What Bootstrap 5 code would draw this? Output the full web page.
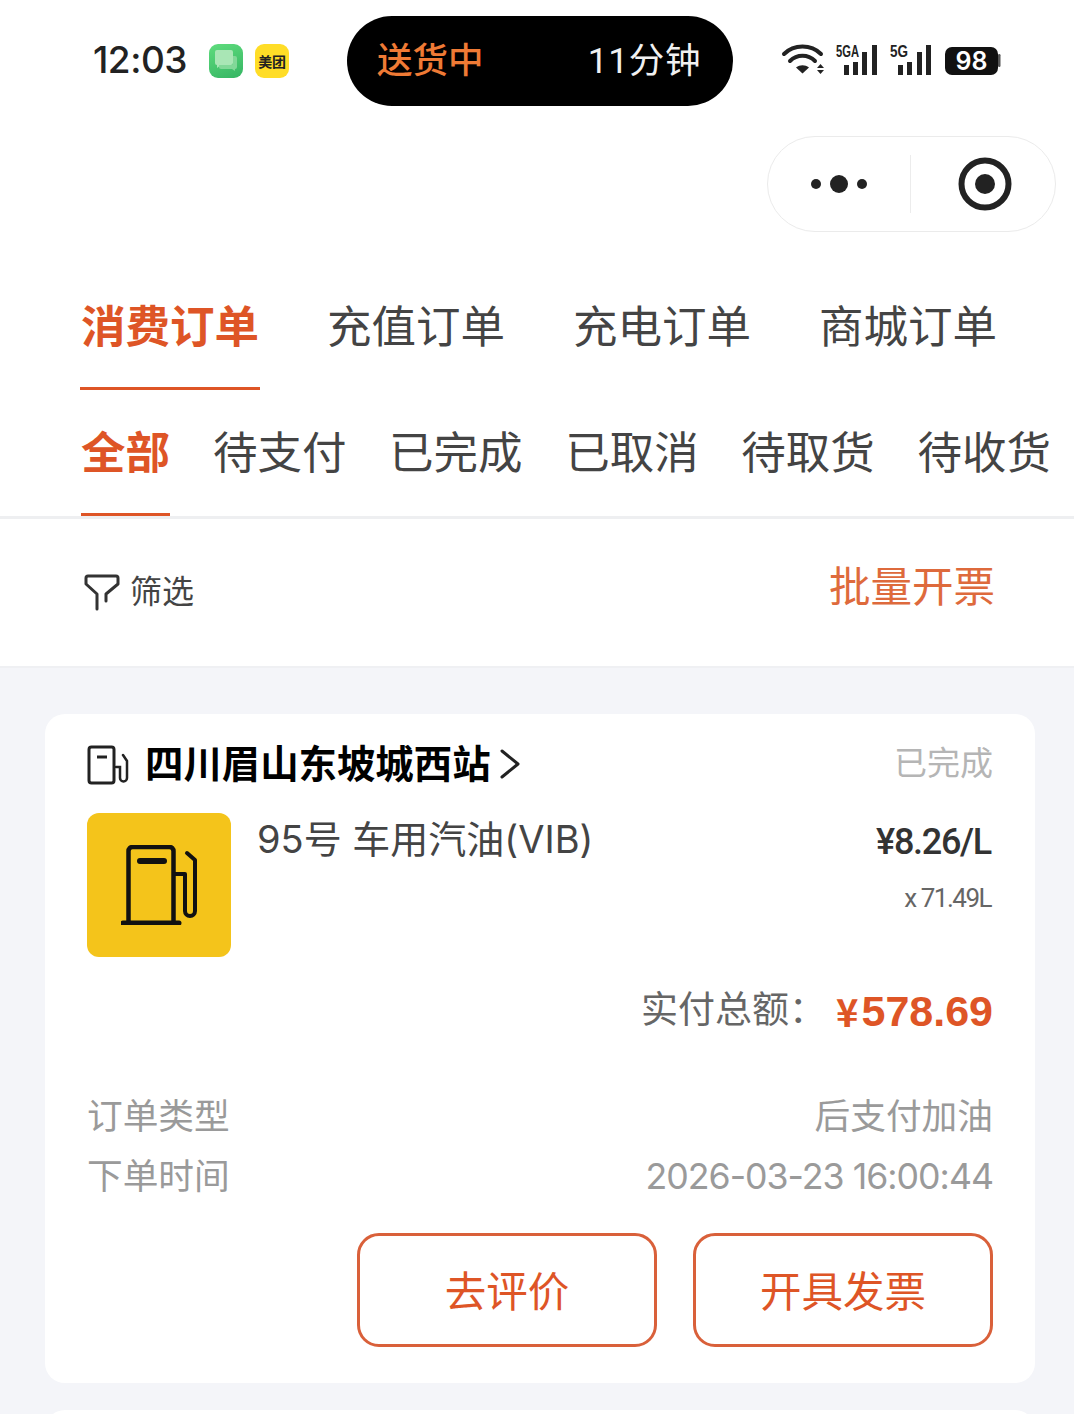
<!DOCTYPE html>
<html lang="zh"><head><meta charset="utf-8"><title>订单</title>
<link href="https://cdn.jsdelivr.net/npm/bootstrap@5.3.0/dist/css/bootstrap.min.css" rel="stylesheet">
<style>
html,body{height:1414px;overflow:hidden}
body{background:#f4f5f9;font-family:Roboto,"Noto Sans CJK SC",sans-serif;color:#333}
.top-white{background:#fff;height:668px;border-bottom:2px solid #eff0f3}
.status-row{height:136px;padding:16px 18px 0 93px}
.clock{font:500 37px/88px Inter,Roboto,sans-serif;color:#222;width:116px;letter-spacing:-.5px}
.app-ico{width:34px;height:34px;border-radius:9px;margin-top:28px}
.app-green{background:linear-gradient(160deg,#5fdc7d,#35b563);margin-right:12px}
.app-yellow{background:#ffdd27;font:700 14px/34px "Noto Sans CJK SC",sans-serif;color:#222;text-align:center;margin-right:58px;white-space:nowrap;letter-spacing:-.3px}
.island{width:386px;height:90px;border-radius:45px;background:#000;padding:0 32px 0 30px;line-height:90px;font-size:35.500px;font-weight:500}
.island-a{color:#ef7a35}.island-b{color:#f1f1f1;letter-spacing:.6px;font-weight:400}
.sys-icons{margin-left:48px;margin-top:26px;height:38px}
.caps-wrap{height:96px;padding-right:18px}
.capsule{width:289px;height:96px;border:1.5px solid #ebebeb;border-radius:48px}
.caps-l{width:143px;height:58px;border-right:1.5px solid #ececec}
.ring-cell{padding-left:4px}
.tabs-a{padding-left:80px;gap:66px;height:158px}
.tab-a{font-size:44.500px;line-height:1;color:#444;width:180px;text-align:center;height:158px;padding-top:74px;white-space:nowrap}
.tab-a.on,.tab-b.on{color:#de5526;font-weight:700}
.tab-a.on{border-bottom:3px solid #de5526}
.tabs-b{padding-left:81px;height:129px;border-bottom:3px solid #eeeff1}
.tab-b{font-size:44.500px;line-height:1;color:#444;padding-top:42px;height:126px;white-space:nowrap}
.tab-b.on{width:89px;border-bottom:3px solid #de5526}
.tabs-b .gap0{margin-left:43px}.tabs-b .gap1{margin-left:42.600px}
.filter-row{height:147px;padding:0 79px 1px 84px}
.filter-txt{font-size:32px;color:#444;margin-left:10px}
.batch{font-size:41.500px;color:#de6a3c;margin-top:-7px}
.order-box{margin:46px 39px 0 45px;height:669px;background:#fff;border-radius:20px;padding:26px 42px 0 42px}
.shop-icon{margin-right:15px}
.shop-name{font-size:38.400px;font-weight:700;color:#000;line-height:50px;white-space:nowrap}
.st{font-size:33px;color:#b5b5b5;margin-top:-2px}
.item-row{margin-top:23px;height:144px}
.thumb{width:144px;height:144px;background:#f4c41b;border-radius:12px}
.item-name{font-family:Inter,"Noto Sans CJK SC",sans-serif;font-size:38px;color:#444;margin-left:26px;line-height:52px;white-space:nowrap}
.unit-price{font-size:36px;font-weight:500;color:#333;line-height:56px;padding-top:1px;letter-spacing:-1.300px;margin-right:2px}
.qty{font-size:26px;color:#666;line-height:56px;letter-spacing:-1.500px;margin-right:2px}
.total-row{margin-top:26px;line-height:56px}
.total-lbl{font-size:37px;color:#666}
.yen{font:700 38px/56px "Noto Sans CJK SC",sans-serif;color:#de5526;margin-left:10px;margin-right:3px}
.total-val{font:700 43px/56px "Liberation Sans",Arial,sans-serif;color:#de5526}
.meta-first{margin-top:47px}
.meta-line{font-family:Inter,"Noto Sans CJK SC",sans-serif;font-size:35.700px;color:#9a9a9a;line-height:60px}
.meta-date{letter-spacing:-1px}
.acts{margin-top:27px;gap:36px}
.act-btn{width:300px;height:114px;border:3px solid #d9603a;border-radius:22px;color:#de5526;background:#fff;font-size:41.500px;line-height:1;padding:5px 0 0}
.act-btn:hover{color:#de5526;background:#fff;border-color:#d9603a}
.next-box{margin:27px 39px 0 45px;height:60px;background:#fff;border-radius:20px}
</style></head>
<body>
<div class="top-white">
 <div class="status-row d-flex align-items-start">
  <div class="clock">12:03</div>
  <div class="app-ico app-green d-flex align-items-center justify-content-center">
   <svg width="28" height="28" viewBox="0 0 28 28"><path d="M3 5a2 2 0 0 1 2-2h14a2 2 0 0 1 2 2v11a2 2 0 0 1-2 2H9l-4 3v-3a2 2 0 0 1-2-2z" fill="#a9e6b5"/><path d="M7 18h12a2 2 0 0 0 2-2V9h2a2 2 0 0 1 2 2v9a2 2 0 0 1-2 2v2l-3-2H9a2 2 0 0 1-2-2z" fill="#82d898"/></svg>
  </div>
  <div class="app-ico app-yellow">美团</div>
  <div class="island d-flex justify-content-between flex-shrink-0"><span class="island-a">送货中</span><span class="island-b">11分钟</span></div>
  <div class="sys-icons flex-shrink-0">
   <svg width="220" height="38" viewBox="0 0 220 38" style="display:block">
    <g fill="none" stroke="#222" stroke-width="4" stroke-linecap="round"><path d="M3 12c10-10 27-10 37 0"/><path d="M9 19c7-7 18-7 25 0"/></g>
    <path d="M15 25.500c4-3 9-3 13 0l-6.500 6z" fill="#222"/>
    <path d="M36 26l3.500-4 3.500 4zM36 28l3.500 4 3.500-4z" fill="#222"/>
    <g fill="#222"><rect x="63" y="23" width="5" height="10"/><rect x="72" y="20" width="5" height="13"/><rect x="81" y="10" width="5" height="23"/><rect x="91" y="3" width="5" height="30"/>
    <rect x="117" y="23" width="5" height="10"/><rect x="126" y="20" width="5" height="13"/><rect x="136" y="10" width="5" height="23"/><rect x="145" y="3" width="5" height="30"/>
    <rect x="164" y="5" width="53" height="28" rx="7" fill="#111"/><rect x="217" y="12" width="2.500" height="13" rx="1.200" fill="#555"/></g>
    <text x="55" y="15" font-family="Liberation Sans,sans-serif" font-size="17" font-weight="700" fill="#222" textLength="23" lengthAdjust="spacingAndGlyphs">5GA</text>
    <text x="109" y="15" font-family="Liberation Sans,sans-serif" font-size="17" font-weight="700" fill="#222" textLength="18" lengthAdjust="spacingAndGlyphs">5G</text>
    <text x="190.500" y="28" text-anchor="middle" font-family="Inter,sans-serif" font-size="25" font-weight="600" fill="#fff">98</text>
   </svg>
  </div>
 </div>
 <div class="caps-wrap d-flex justify-content-end">
  <div class="capsule d-flex align-items-center">
   <div class="caps-l d-flex align-items-center justify-content-center">
    <svg width="58" height="20" viewBox="0 0 58 20"><circle cx="6" cy="10" r="5" fill="#222"/><circle cx="29" cy="10" r="9" fill="#222"/><circle cx="52" cy="10" r="5" fill="#222"/></svg>
   </div>
   <div class="flex-fill d-flex justify-content-center ring-cell">
    <svg width="54" height="54" viewBox="0 0 54 54"><circle cx="27" cy="27" r="23.500" fill="none" stroke="#222" stroke-width="6"/><circle cx="27" cy="27" r="10" fill="#222"/></svg>
   </div>
  </div>
 </div>
 <div class="tabs-a d-flex align-items-start">
  <div class="tab-a on">消费订单</div><div class="tab-a">充值订单</div><div class="tab-a">充电订单</div><div class="tab-a">商城订单</div>
 </div>
 <div class="tabs-b d-flex">
  <div class="tab-b on">全部</div><div class="tab-b gap0">待支付</div><div class="tab-b gap1">已完成</div><div class="tab-b gap1">已取消</div><div class="tab-b gap1">待取货</div><div class="tab-b gap1">待收货</div>
 </div>
 <div class="filter-row d-flex justify-content-between align-items-center">
  <div class="d-flex align-items-center">
   <svg width="36" height="38" viewBox="0 0 36 38"><path d="M13 36V21L2 11V5a2 2 0 0 1 2-2h28a2 2 0 0 1 2 2v6L22 21v7" fill="none" stroke="#333" stroke-width="3" stroke-linecap="round" stroke-linejoin="round"/></svg>
   <span class="filter-txt">筛选</span>
  </div>
  <div class="batch">批量开票</div>
 </div>
</div>
<div class="order-box">
 <div class="d-flex justify-content-between align-items-center">
  <div class="d-flex align-items-center">
   <svg class="shop-icon" width="43" height="40" viewBox="0 0 43 40"><rect x="2" y="2" width="25" height="36" rx="2.500" fill="none" stroke="#222" stroke-width="3"/><path d="M10 12h10" stroke="#222" stroke-width="3"/><path d="M29 22h4v11a3.500 3.500 0 0 0 7 0V16l-4-6" fill="none" stroke="#222" stroke-width="2.500" stroke-linecap="round"/></svg>
   <span class="shop-name">四川眉山东坡城西站</span>
   <svg width="20" height="32" viewBox="0 0 20 32" style="margin-left:9px;margin-top:-3px"><path d="M2 3l16 13L2 29" fill="none" stroke="#222" stroke-width="3" stroke-linecap="round" stroke-linejoin="round"/></svg>
  </div>
  <span class="st">已完成</span>
 </div>
 <div class="item-row d-flex">
  <div class="thumb d-flex align-items-center justify-content-center flex-shrink-0">
   <svg width="76" height="80" viewBox="0 0 76 80"><path d="M7.500 78V6a4 4 0 0 1 4-4h37a4 4 0 0 1 4 4v72" fill="none" stroke="#111" stroke-width="4.500"/><path d="M2 78h56" stroke="#111" stroke-width="5" stroke-linecap="round"/><path d="M19 16h24" stroke="#111" stroke-width="6" stroke-linecap="round"/><path d="M53 29h11v37a5 5 0 0 0 10 0V15l-8-7" fill="none" stroke="#111" stroke-width="4" stroke-linecap="round" stroke-linejoin="round"/></svg>
  </div>
  <div class="item-name flex-fill">95号 车用汽油(VIB)</div>
  <div class="text-end">
   <div class="unit-price">¥8.26/L</div>
   <div class="qty">x 71.49L</div>
  </div>
 </div>
 <div class="total-row d-flex justify-content-end align-items-center">
  <span class="total-lbl">实付总额：</span><span class="yen">¥</span><span class="total-val">578.69</span>
 </div>
 <div class="meta-first meta-line d-flex justify-content-between"><span>订单类型</span><span>后支付加油</span></div>
 <div class="meta-line d-flex justify-content-between"><span>下单时间</span><span class="meta-date">2026-03-23 16:00:44</span></div>
 <div class="acts d-flex justify-content-end">
  <button type="button" class="btn act-btn">去评价</button>
  <button type="button" class="btn act-btn">开具发票</button>
 </div>
</div>
<div class="next-box"></div>
</body></html>
